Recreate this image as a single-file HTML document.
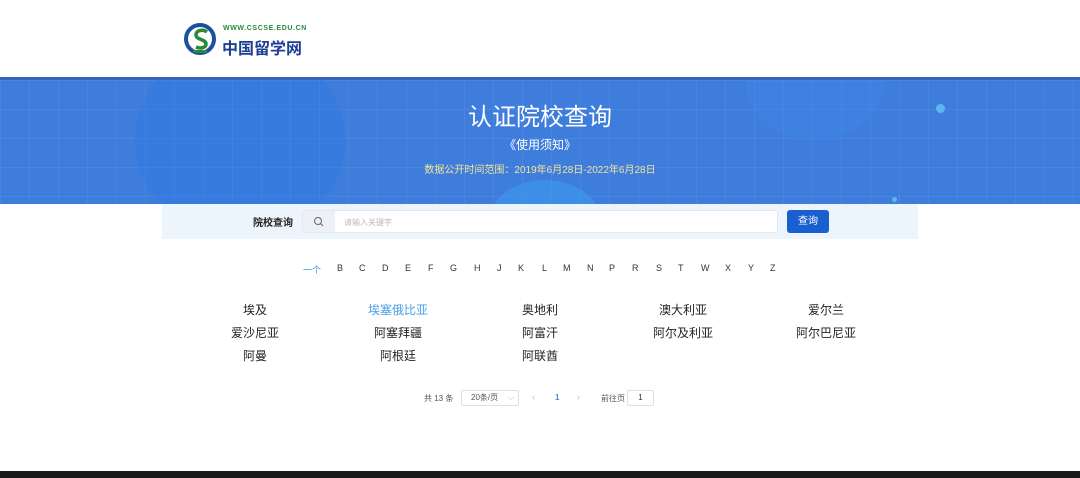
<!DOCTYPE html>
<html><head><meta charset="utf-8"><style>
*{margin:0;padding:0;box-sizing:border-box}
body{width:1080px;height:478px;overflow:hidden;background:#fff;font-family:"Liberation Sans","Noto Sans CJK SC",sans-serif;position:relative}
.abs{position:absolute}
.banner{left:0;top:77px;width:1080px;height:127px;overflow:hidden;border-top:3px solid #3a62b8;
background-image:linear-gradient(rgba(255,255,255,.05) 1px,transparent 1px),linear-gradient(90deg,rgba(255,255,255,.05) 1px,transparent 1px);background-size:29px 29px;background-color:#3f7ddc}
.c{text-align:center;width:1080px;left:0;color:#fff}
.cell{position:absolute;width:140px;text-align:center;font-size:12px;color:#222}
.l{position:absolute;top:263px;font-size:9px;color:#333}
</style></head><body>
<svg class="abs" style="left:183px;top:22px" width="36" height="36" viewBox="0 0 36 36">
<circle cx="17" cy="17" r="14" fill="none" stroke="#1d4f9c" stroke-width="4"/>
<path d="M24 10c-4-3-11-2-11 3 0 5 10 4 10 9 0 4-6 5-10 3" fill="none" stroke="#2a8a3a" stroke-width="3.5"/>
<rect x="10" y="28" width="14" height="3" fill="#2a8a3a"/></svg>
<div class="abs" style="left:223px;top:25px;font-size:7px;font-weight:bold;color:#2a8a3a;letter-spacing:.6px">WWW.CSCSE.EDU.CN</div>
<div class="abs" style="left:222px;top:35px;font-size:16px;font-weight:bold;color:#1d3f93;letter-spacing:0">中国留学网</div>
<div class="abs banner">
<div class="abs" style="left:135px;top:-40px;width:210px;height:200px;border-radius:50%;background:rgba(40,120,230,.3)"></div>
<div class="abs" style="left:745px;top:-60px;width:140px;height:120px;border-radius:50%;background:rgba(60,140,240,.3)"></div>
<div class="abs" style="left:490px;top:100px;width:110px;height:80px;border-radius:50%;background:rgba(60,160,240,.5)"></div>
<div class="abs" style="left:936px;top:24px;width:9px;height:9px;border-radius:50%;background:#5ab8ee"></div>
<div class="abs" style="left:892px;top:117px;width:5px;height:5px;border-radius:50%;background:#5ab8ee"></div>
</div>
<div class="abs c" style="top:97px;font-size:24px">认证院校查询</div>
<div class="abs c" style="top:136px;font-size:12px">《使用须知》</div>
<div class="abs c" style="top:161px;font-size:10px;color:#f3e39a">数据公开时间范围：2019年6月28日-2022年6月28日</div>
<div class="abs" style="left:162px;top:204px;width:756px;height:35px;background:#ecf4fc"></div>
<div class="abs" style="left:253px;top:214px;font-size:10px;font-weight:bold;color:#222">院校查询</div>
<div class="abs" style="left:302px;top:210px;width:476px;height:23px;background:#fff;border:1px solid #e2e6ee;border-radius:3px"></div>
<div class="abs" style="left:303px;top:211px;width:32px;height:21px;background:#edf0f5"></div>
<svg class="abs" style="left:313px;top:216px" width="11" height="11" viewBox="0 0 11 11"><circle cx="5" cy="5" r="3.5" fill="none" stroke="#666" stroke-width="1"/><path d="M7.5 7.5L10 10" stroke="#666"/></svg>
<div class="abs" style="left:344px;top:217px;font-size:8px;color:#bbb">请输入关键字</div>
<div class="abs" style="left:787px;top:210px;width:42px;height:23px;background:#1a5fcf;border-radius:3px;color:#fff;font-size:10px;text-align:center;line-height:23px">查询</div>
<span class="l" style="left:303px;color:#4a90e2">一个</span><span class="l" style="left:337px">B</span><span class="l" style="left:359px">C</span><span class="l" style="left:382px">D</span><span class="l" style="left:405px">E</span><span class="l" style="left:428px">F</span><span class="l" style="left:450px">G</span><span class="l" style="left:474px">H</span><span class="l" style="left:497px">J</span><span class="l" style="left:518px">K</span><span class="l" style="left:542px">L</span><span class="l" style="left:563px">M</span><span class="l" style="left:587px">N</span><span class="l" style="left:609px">P</span><span class="l" style="left:632px">R</span><span class="l" style="left:656px">S</span><span class="l" style="left:678px">T</span><span class="l" style="left:701px">W</span><span class="l" style="left:725px">X</span><span class="l" style="left:748px">Y</span><span class="l" style="left:770px">Z</span>
<div class="cell" style="left:185px;top:301px">埃及</div>
<div class="cell" style="left:328px;top:301px;color:#4a9ee8">埃塞俄比亚</div>
<div class="cell" style="left:470px;top:301px">奥地利</div>
<div class="cell" style="left:613px;top:301px">澳大利亚</div>
<div class="cell" style="left:756px;top:301px">爱尔兰</div>
<div class="cell" style="left:185px;top:324px">爱沙尼亚</div>
<div class="cell" style="left:328px;top:324px">阿塞拜疆</div>
<div class="cell" style="left:470px;top:324px">阿富汗</div>
<div class="cell" style="left:613px;top:324px">阿尔及利亚</div>
<div class="cell" style="left:756px;top:324px">阿尔巴尼亚</div>
<div class="cell" style="left:185px;top:347px">阿曼</div>
<div class="cell" style="left:328px;top:347px">阿根廷</div>
<div class="cell" style="left:470px;top:347px">阿联酋</div>
<div class="abs" style="left:424px;top:393px;font-size:8px;color:#555">共 13 条</div>
<div class="abs" style="left:461px;top:390px;width:58px;height:16px;border:1px solid #dcdfe6;border-radius:2px;font-size:8px;color:#555;line-height:14px;padding-left:9px">20条/页<span style="position:absolute;right:4px;color:#bbb">⌵</span></div>
<div class="abs" style="left:532px;top:392px;font-size:9px;color:#bbb">‹</div>
<div class="abs" style="left:555px;top:393px;font-size:8px;color:#3a8ee6;font-weight:bold">1</div>
<div class="abs" style="left:577px;top:392px;font-size:9px;color:#bbb">›</div>
<div class="abs" style="left:601px;top:393px;font-size:8px;color:#555">前往页</div>
<div class="abs" style="left:627px;top:390px;width:27px;height:16px;border:1px solid #dcdfe6;border-radius:2px;font-size:8px;color:#333;text-align:center;line-height:14px">1</div>
<div class="abs" style="left:0;top:471px;width:1080px;height:7px;background:#1a1a1a"></div>
</body></html>
